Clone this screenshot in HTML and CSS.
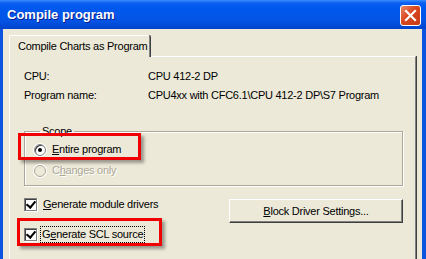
FILE: index.html
```html
<!DOCTYPE html>
<html lang="en">
<head>
  <meta charset="UTF-8">
  <title>Compile program</title>
  <link rel="stylesheet" href="styles.css">
</head>
<body>
  <div class="window">
    <div class="titlebar">
      <div class="title">Compile program</div>
      <div class="close-btn">
        <svg width="13" height="13" viewBox="0 0 13 13">
          <path d="M2 2 L11 11 M11 2 L2 11" stroke="#fff" stroke-width="2.2" stroke-linecap="square"/>
        </svg>
      </div>
    </div>

    <div class="client">
      <div class="tabs">
        <div class="tab">Compile Charts as Program</div>
      </div>

      <div class="panel">
        <div class="info">
          <div class="info-label">CPU:</div>
          <div class="info-value">CPU 412-2 DP</div>
          <div class="info-label">Program name:</div>
          <div class="info-value">CPU4xx with CFC6.1\CPU 412-2 DP\S7 Program</div>
        </div>

        <fieldset class="scope">
          <legend>Scope</legend>
          <div class="option highlight">
            <span class="radio checked"></span>
            <span class="label"><u>E</u>ntire program</span>
          </div>
          <div class="option disabled">
            <span class="radio"></span>
            <span class="label">C<u>h</u>anges only</span>
          </div>
        </fieldset>

        <div class="bottom">
          <div class="checks">
            <div class="option">
              <span class="check"></span>
              <span class="label"><u>G</u>enerate module drivers</span>
            </div>
            <div class="option highlight wide">
              <span class="check"></span>
              <span class="label focus">G<u>e</u>nerate SCL source</span>
            </div>
          </div>
          <button class="btn"><u>B</u>lock Driver Settings...</button>
        </div>
      </div>
    </div>
  </div>
</body>
</html>
```

FILE: styles.css
```css
* {
  margin: 0;
  padding: 0;
  box-sizing: border-box;
}

body {
  font-family: 'Liberation Sans', Arial, sans-serif;
  font-size: 11px;
  letter-spacing: -0.25px;
  color: #000;
  background: #fff;
  width: 426px;
  height: 259px;
  overflow: hidden;
}

.window {
  width: 426px;
  height: 259px;
  background: #0a54e0;
  padding: 0 4px 0 3px;
  display: flex;
  flex-direction: column;
}

.titlebar {
  height: 29px;
  margin: 0 -4px 0 -3px;
  padding: 0 5px 0 7px;
  display: flex;
  align-items: center;
  justify-content: space-between;
  background: linear-gradient(#3b8cff 0px, #0b5ff0 3px, #0058ee 8px, #0455e6 20px, #0043cc 29px);
}

.title {
  font-family: 'Liberation Sans', Arial, sans-serif;
  font-weight: bold;
  font-size: 13px;
  letter-spacing: 0;
  color: #fff;
  text-shadow: 1px 1px #0a1e8c;
}

.close-btn {
  width: 21px;
  height: 21px;
  margin-right: 0;
  margin-top: 1px;
  border: 1px solid #fff;
  border-radius: 3px;
  background: linear-gradient(135deg, #e8886a 0%, #d9471f 45%, #c83b16 100%);
  display: flex;
  align-items: center;
  justify-content: center;
}

.client {
  flex: 1;
  background: #ece9d8;
  padding: 6px 0 0 6px;
  display: flex;
  flex-direction: column;
}

.tabs {
  display: flex;
  height: 21px;
  position: relative;
  z-index: 1;
}

.tab {
  width: 141px;
  height: 22px;
  padding: 4px 0 0 8px;
  white-space: nowrap;
  background: #ece9d8;
  border-top: 1px solid #fff;
  border-left: 1px solid #fff;
  border-right: 1px solid #808080;
  box-shadow: 1px 0 #404040;
  border-radius: 2px 2px 0 0;
}

.panel {
  flex: 1;
  width: 407px;
  border-top: 1px solid #fff;
  border-left: 1px solid #fff;
  border-right: 1px solid #808080;
  box-shadow: 1px 0 #404040;
  padding: 13px 14px 0 14px;
}

.info {
  display: grid;
  grid-template-columns: 124px 1fr;
  row-gap: 6px;
  line-height: 13px;
}

.scope {
  margin-top: 23px;
  width: 379px;
  height: 61px;
  border: 1px solid #aca899;
  box-shadow: inset 1px 1px #fff, 1px 1px #fff;
  padding: 5px 0 0 9px;
}

.scope legend {
  margin-left: 6px;
  padding: 0 2px;
  line-height: 12px;
}

.option {
  display: flex;
  align-items: center;
  height: 15px;
  gap: 6px;
  position: relative;
}

.scope .option + .option {
  margin-top: 6px;
}

.label {
  line-height: 13px;
}

.radio {
  width: 12px;
  height: 12px;
  border-radius: 50%;
  background: #fff;
  border: 1px solid #808080;
  box-shadow: inset 1px 1px #404040, 0 0 0 1px #fff;
  display: flex;
  align-items: center;
  justify-content: center;
}

.radio.checked::after {
  content: "";
  width: 4px;
  height: 4px;
  border-radius: 50%;
  background: #000;
}

.disabled .radio {
  background: #ece9d8;
  border-color: #aca899;
  box-shadow: 0 0 0 1px #fff;
}

.disabled .label {
  color: #aca899;
  text-shadow: 1px 1px #fff;
}

.highlight::before {
  content: "";
  box-sizing: border-box;
  position: absolute;
  left: -16px;
  top: -9px;
  width: 123px;
  height: 27px;
  border: 3px solid #f00000;
  box-shadow: 3px 3px 3px rgba(0, 0, 0, 0.35);
  pointer-events: none;
}

.bottom {
  margin-top: 9px;
  display: flex;
  justify-content: space-between;
  align-items: flex-start;
  width: 379px;
}

.checks {
  display: flex;
  flex-direction: column;
  gap: 15px;
  padding-top: 2px;
}

.check {
  width: 13px;
  height: 13px;
  background: #fff;
  border: 1px solid #808080;
  box-shadow: inset 1px 1px #404040, 1px 1px #fff;
  position: relative;
}

.check::after {
  content: "";
  position: absolute;
  left: 3px;
  top: 0px;
  width: 4px;
  height: 7px;
  border-right: 2px solid #000;
  border-bottom: 2px solid #000;
  transform: rotate(40deg);
}

.option.wide::before {
  left: -7px;
  top: -9px;
  width: 145px;
  height: 28px;
}

.focus {
  outline: 1px dotted #000;
  outline-offset: 0;
  padding: 1px 1px;
  margin-left: -2px;
}

.btn {
  width: 174px;
  height: 24px;
  margin-top: 4px;
  font-family: inherit;
  font-size: 11px;
  letter-spacing: -0.25px;
  background: #ece9d8;
  border: 1px solid;
  border-color: #fff #404040 #404040 #fff;
  box-shadow: inset -1px -1px #808080;
  color: #000;
}
```
